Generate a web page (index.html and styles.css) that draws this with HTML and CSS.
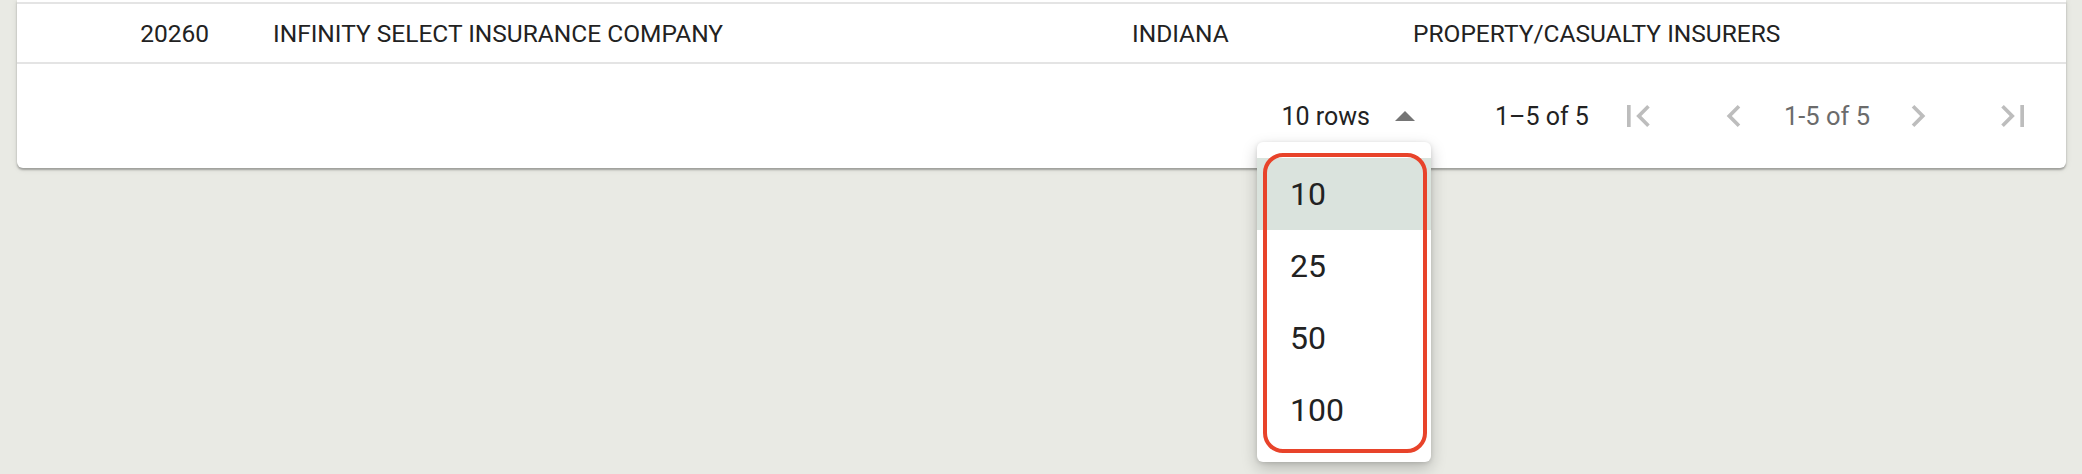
FILE: index.html
```html
<!DOCTYPE html>
<html lang="en">
<head>
<meta charset="utf-8">
<title>Table pagination</title>
<link rel="stylesheet" href="styles.css">
</head>
<body>
<div class="card">
  <div class="row">
    <div class="cell cell-code">20260</div>
    <div class="cell">INFINITY SELECT INSURANCE COMPANY</div>
    <div class="cell">INDIANA</div>
    <div class="cell">PROPERTY/CASUALTY INSURERS</div>
  </div>
  <div class="footer">
    <div class="select">
      <span class="select-label">10 rows</span>
      <svg class="caret" width="20" height="10" viewBox="0 0 20 10"><polygon points="0,10 10,0 20,10" fill="#757575"/></svg>
    </div>
    <span class="range">1–5 of 5</span>
    <svg class="nav nav-first" width="44" height="44" viewBox="0 0 24 24"><path d="M18.41 16.59L13.82 12l4.59-4.59L17 6l-6 6 6 6zM6 6h2v12H6z" fill="#bdbdbd"/></svg>
    <svg class="nav nav-prev" width="44" height="44" viewBox="0 0 24 24"><path d="M15.41 7.41L14 6l-6 6 6 6 1.41-1.41L10.83 12z" fill="#bdbdbd"/></svg>
    <span class="page-info">1-5 of 5</span>
    <svg class="nav nav-next" width="44" height="44" viewBox="0 0 24 24"><path d="M10 6L8.59 7.41 13.17 12l-4.58 4.59L10 18l6-6z" fill="#bdbdbd"/></svg>
    <svg class="nav nav-last" width="44" height="44" viewBox="0 0 24 24"><path d="M5.59 7.41L10.18 12l-4.59 4.59L7 18l6-6-6-6zM16 6h2v12h-2z" fill="#bdbdbd"/></svg>
  </div>
  <div class="menu">
    <div class="menu-item is-selected">10</div>
    <div class="menu-item">25</div>
    <div class="menu-item">50</div>
    <div class="menu-item">100</div>
    <div class="highlight-ring"></div>
  </div>
</div>
</body>
</html>
```

FILE: styles.css
```css
html, body {
  margin: 0;
  padding: 0;
}
body {
  background: #e9eae4;
  font-family: Roboto, "Liberation Sans", sans-serif;
  color: #222222;
  height: 474px;
  overflow: hidden;
}
.card {
  position: relative;
  margin-left: 17px;
  width: 2049px;
  background: #ffffff;
  padding-top: 2px;
  border-radius: 0 0 6px 6px;
  box-shadow: 0 2px 2px rgba(0, 0, 0, 0.28), 0 1px 6px rgba(0, 0, 0, 0.10);
}
.row {
  display: grid;
  grid-template-columns: 256px 859px 281px 1fr;
  align-items: center;
  height: 58px;
  border-top: 2px solid #e4e4e4;
  border-bottom: 2px solid #e4e4e4;
  font-size: 24.5px;
}
.cell-code {
  text-align: right;
  padding-right: 64px;
}
.footer {
  display: flex;
  align-items: center;
  justify-content: flex-end;
  height: 104px;
  padding-right: 31px;
  font-size: 25px;
}
.select {
  display: flex;
  align-items: center;
}
.caret {
  margin-left: 25px;
}
.range {
  margin-left: 80px;
  color: #222222;
}
.nav {
  display: block;
}
.nav-first { margin-left: 27px; }
.nav-prev { margin-left: 52px; }
.page-info {
  margin-left: 28px;
  font-size: 25.5px;
  color: #6b6b6b;
}
.nav-next { margin-left: 26px; }
.nav-last { margin-left: 51px; }
.menu {
  position: absolute;
  left: 1240px;
  top: 142px;
  width: 174px;
  padding: 16px 0;
  background: #ffffff;
  border-radius: 6px;
  box-shadow: 0 6px 16px rgba(0, 0, 0, 0.22), 0 1px 4px rgba(0, 0, 0, 0.12);
}
.menu-item {
  height: 72px;
  display: flex;
  align-items: center;
  padding-left: 33px;
  font-size: 32px;
  color: #222222;
}
.menu-item.is-selected {
  background: #dae3dd;
}
.highlight-ring {
  position: absolute;
  left: 6px;
  top: 11px;
  width: 156px;
  height: 292px;
  border: 4px solid #e8432a;
  border-radius: 20px;
}
```
